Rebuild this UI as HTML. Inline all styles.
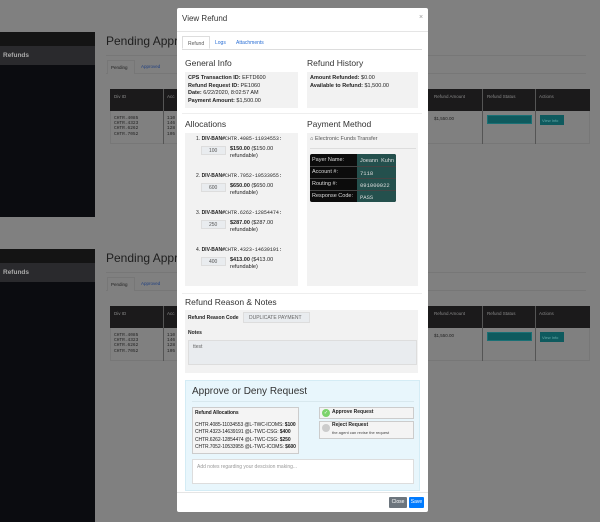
<!DOCTYPE html>
<html><head><meta charset="utf-8"><style>
*{margin:0;padding:0;box-sizing:border-box}
html{width:600px;height:522px;overflow:hidden}
body{width:600px;height:522px;background:#808080;position:relative;overflow:hidden;font-family:"Liberation Sans",sans-serif;}
.a{position:absolute;white-space:nowrap}
.mono{font-family:"Liberation Mono",monospace}
.t{font-size:5.5px;color:#222;line-height:7.5px}
.b{font-weight:bold}
.h{font-size:8.5px;color:#333}
.gray{background:#f2f2f2}
.w{white-space:normal}
</style></head><body>

<div class="a" style="left:0;top:0;width:600px;height:217px;overflow:hidden">
 <div class="a" style="left:0;top:32px;width:95px;height:185px;background:#0b0c10"></div>
 <div class="a" style="left:0;top:32px;width:95px;height:14px;background:#141414"></div>
 <div class="a" style="left:0;top:46px;width:95px;height:19px;background:#2a2a2d;color:#aaa;font-size:6.5px;font-weight:bold;padding:6px 3px">Refunds</div>
 <div class="a" style="left:106px;top:34px;font-size:12px;color:#1e1e1e">Pending Approv</div>
 <div class="a" style="left:106px;top:55px;width:480px;height:1px;background:#777"></div>
 <div class="a" style="left:106px;top:73px;width:480px;height:1px;background:#777"></div>
 <div class="a" style="left:107px;top:60px;width:28px;height:14px;border:1px solid #777;border-bottom:none;background:#808080;font-size:4.5px;color:#222;padding:4px 3px">Pending</div>
 <div class="a" style="left:141px;top:64px;font-size:4.5px;color:#1f3f80">Approved</div>
 <div class="a" style="left:110px;top:89px;width:480px;height:22px;background:#1b1a1b"></div>
 <div class="a" style="left:110px;top:111px;width:480px;height:33px;border:1px solid #777;border-top:none"></div>
 <div class="a" style="left:163px;top:89px;width:1px;height:55px;background:#555"></div>
 <div class="a" style="left:482px;top:89px;width:1px;height:55px;background:#555"></div>
 <div class="a" style="left:535px;top:89px;width:1px;height:55px;background:#555"></div>
 <div class="a" style="left:114px;top:94px;font-size:4.5px;color:#888">Div ID</div>
 <div class="a" style="left:167px;top:94px;font-size:4.5px;color:#888">Acc</div>
 <div class="a" style="left:434px;top:94px;font-size:4.5px;color:#888">Refund Amount</div>
 <div class="a" style="left:487px;top:94px;font-size:4.5px;color:#888">Refund Status</div>
 <div class="a" style="left:539px;top:94px;font-size:4.5px;color:#888">Actions</div>
 <div class="a mono" style="left:114px;top:116px;font-size:4.5px;line-height:5.2px;color:#222">CHTR.4085<br>CHTR.4323<br>CHTR.6262<br>CHTR.7052</div>
 <div class="a mono" style="left:167px;top:116px;font-size:4.5px;line-height:5.2px;color:#222">110<br>146<br>128<br>105</div>
 <div class="a" style="left:434px;top:116px;font-size:4.5px;color:#222">$1,550.00</div>
 <div class="a" style="left:487px;top:115px;width:45px;height:9px;background:#0e5a5e;border:1px solid #1a7075"></div>
 <div class="a" style="left:540px;top:115px;width:24px;height:10px;background:#0e5a5e;font-size:4px;color:#6aa;padding:3px 2px">View Info</div>
</div>
<div class="a" style="left:0;top:217px;width:600px;height:305px;overflow:hidden">
 <div class="a" style="left:0;top:32px;width:95px;height:290px;background:#0b0c10"></div>
 <div class="a" style="left:0;top:32px;width:95px;height:14px;background:#141414"></div>
 <div class="a" style="left:0;top:46px;width:95px;height:19px;background:#2a2a2d;color:#aaa;font-size:6.5px;font-weight:bold;padding:6px 3px">Refunds</div>
 <div class="a" style="left:106px;top:34px;font-size:12px;color:#1e1e1e">Pending Approv</div>
 <div class="a" style="left:106px;top:55px;width:480px;height:1px;background:#777"></div>
 <div class="a" style="left:106px;top:73px;width:480px;height:1px;background:#777"></div>
 <div class="a" style="left:107px;top:60px;width:28px;height:14px;border:1px solid #777;border-bottom:none;background:#808080;font-size:4.5px;color:#222;padding:4px 3px">Pending</div>
 <div class="a" style="left:141px;top:64px;font-size:4.5px;color:#1f3f80">Approved</div>
 <div class="a" style="left:110px;top:89px;width:480px;height:22px;background:#1b1a1b"></div>
 <div class="a" style="left:110px;top:111px;width:480px;height:33px;border:1px solid #777;border-top:none"></div>
 <div class="a" style="left:163px;top:89px;width:1px;height:55px;background:#555"></div>
 <div class="a" style="left:482px;top:89px;width:1px;height:55px;background:#555"></div>
 <div class="a" style="left:535px;top:89px;width:1px;height:55px;background:#555"></div>
 <div class="a" style="left:114px;top:94px;font-size:4.5px;color:#888">Div ID</div>
 <div class="a" style="left:167px;top:94px;font-size:4.5px;color:#888">Acc</div>
 <div class="a" style="left:434px;top:94px;font-size:4.5px;color:#888">Refund Amount</div>
 <div class="a" style="left:487px;top:94px;font-size:4.5px;color:#888">Refund Status</div>
 <div class="a" style="left:539px;top:94px;font-size:4.5px;color:#888">Actions</div>
 <div class="a mono" style="left:114px;top:116px;font-size:4.5px;line-height:5.2px;color:#222">CHTR.4085<br>CHTR.4323<br>CHTR.6262<br>CHTR.7052</div>
 <div class="a mono" style="left:167px;top:116px;font-size:4.5px;line-height:5.2px;color:#222">110<br>146<br>128<br>105</div>
 <div class="a" style="left:434px;top:116px;font-size:4.5px;color:#222">$1,550.00</div>
 <div class="a" style="left:487px;top:115px;width:45px;height:9px;background:#0e5a5e;border:1px solid #1a7075"></div>
 <div class="a" style="left:540px;top:115px;width:24px;height:10px;background:#0e5a5e;font-size:4px;color:#6aa;padding:3px 2px">View Info</div>
</div>

<div class="a" style="left:177px;top:8px;width:251px;height:504px;background:#fff;border-radius:2px">
 <div class="a" style="left:5px;top:6px;font-size:8px;color:#333">View Refund</div>
 <div class="a" style="left:242px;top:6px;font-size:7px;color:#999">×</div>
 <div class="a" style="left:0;top:23px;width:251px;height:1px;background:#e5e5e5"></div>
 <div class="a" style="left:5px;top:28px;width:28px;height:13px;border:1px solid #ddd;border-bottom:1px solid #fff;font-size:5px;color:#555;padding:4px 5px;background:#fff;z-index:2">Refund</div>
 <div class="a" style="left:5px;top:41px;width:240px;height:1px;background:#ddd"></div>
 <div class="a" style="left:38px;top:32px;font-size:5px;color:#2a6fd6">Logs</div>
 <div class="a" style="left:59px;top:32px;font-size:5px;color:#2a6fd6">Attachments</div>

 <div class="a h" style="left:8px;top:50px">General Info</div>
 <div class="a h" style="left:130px;top:50px">Refund History</div>
 <div class="a gray t" style="left:8px;top:64px;width:113px;height:36px;padding:3px 3px"><b>CPS Transaction ID:</b> EFTD600<br><b>Refund Request ID:</b> PE1060<br><b>Date:</b> 6/22/2020, 8:02:57 AM<br><b>Payment Amount:</b> $1,500.00</div>
 <div class="a gray t" style="left:130px;top:64px;width:111px;height:36px;padding:3px 3px"><b>Amount Refunded:</b> $0.00<br><b>Available to Refund:</b> $1,500.00</div>
 <div class="a" style="left:5px;top:105px;width:240px;height:1px;background:#eee"></div>

 <div class="a h" style="left:8px;top:111px">Allocations</div>
 <div class="a h" style="left:130px;top:111px">Payment Method</div>
 <div class="a gray" style="left:8px;top:125px;width:113px;height:153px"></div>
 <div class="a gray" style="left:130px;top:125px;width:111px;height:153px"></div>

 <div class="a t" style="left:19px;top:128px;font-size:5px">1. <b>DIV-BAN#</b><span class="mono">CHTR.4085-11034553:</span></div>
 <div class="a" style="left:24px;top:138px;width:25px;height:9px;background:#e9ecef;border:1px solid #ddd;font-size:5px;color:#555;padding:1px 7px">100</div>
 <div class="a t w" style="left:53px;top:138px;width:65px;line-height:7px"><b>$150.00</b> ($150.00 refundable)</div>
 <div class="a t" style="left:19px;top:165px;font-size:5px">2. <b>DIV-BAN#</b><span class="mono">CHTR.7052-10533955:</span></div>
 <div class="a" style="left:24px;top:175px;width:25px;height:9px;background:#e9ecef;border:1px solid #ddd;font-size:5px;color:#555;padding:1px 7px">600</div>
 <div class="a t w" style="left:53px;top:175px;width:65px;line-height:7px"><b>$650.00</b> ($650.00 refundable)</div>
 <div class="a t" style="left:19px;top:202px;font-size:5px">3. <b>DIV-BAN#</b><span class="mono">CHTR.6262-12854474:</span></div>
 <div class="a" style="left:24px;top:212px;width:25px;height:9px;background:#e9ecef;border:1px solid #ddd;font-size:5px;color:#555;padding:1px 7px">250</div>
 <div class="a t w" style="left:53px;top:212px;width:65px;line-height:7px"><b>$287.00</b> ($287.00 refundable)</div>
 <div class="a t" style="left:19px;top:239px;font-size:5px">4. <b>DIV-BAN#</b><span class="mono">CHTR.4323-14639191:</span></div>
 <div class="a" style="left:24px;top:249px;width:25px;height:9px;background:#e9ecef;border:1px solid #ddd;font-size:5px;color:#555;padding:1px 7px">400</div>
 <div class="a t w" style="left:53px;top:249px;width:65px;line-height:7px"><b>$413.00</b> ($413.00 refundable)</div>

 <div class="a t" style="left:133px;top:128px;color:#555">⌂ Electronic Funds Transfer</div>
 <div class="a" style="left:133px;top:140px;width:106px;height:1px;background:#ddd"></div>
 <div class="a" style="left:133px;top:146px;width:86px;height:48px;background:#0c0c0c;border-radius:2px;overflow:hidden;font-size:5.5px;color:#ddd">
  <div class="a" style="left:47px;top:0;width:39px;height:48px;background:#24504d"></div>
  <div class="a" style="left:2px;top:3px">Payer Name:</div><div class="a" style="left:50px;top:4px">Joeann&nbsp; Kuhn</div>
  <div class="a" style="left:0;top:12px;width:86px;height:1px;background:#444"></div>
  <div class="a" style="left:2px;top:15px">Account #:</div><div class="a mono" style="left:50px;top:16px">7118</div>
  <div class="a" style="left:0;top:24px;width:86px;height:1px;background:#444"></div>
  <div class="a" style="left:2px;top:27px">Routing #:</div><div class="a mono" style="left:50px;top:28px">091000022</div>
  <div class="a" style="left:0;top:36px;width:86px;height:1px;background:#444"></div>
  <div class="a" style="left:2px;top:39px">Response Code:</div><div class="a mono" style="left:50px;top:40px">PASS</div>
 </div>
 <div class="a" style="left:5px;top:285px;width:240px;height:1px;background:#eee"></div>

 <div class="a h" style="left:8px;top:289px">Refund Reason &amp; Notes</div>
 <div class="a gray" style="left:8px;top:302px;width:233px;height:63px"></div>
 <div class="a t b" style="left:11px;top:307px;font-size:5px">Refund Reason Code</div>
 <div class="a" style="left:66px;top:304px;width:67px;height:11px;background:#e9ecef;border:1px solid #ddd;font-size:5px;color:#666;padding:2px 5px">DUPLICATE PAYMENT</div>
 <div class="a t b" style="left:11px;top:322px;font-size:5px">Notes</div>
 <div class="a" style="left:11px;top:332px;width:229px;height:25px;background:#e9ecef;border:1px solid #ddd;font-size:5px;color:#666;padding:3px 4px">ttest</div>

 <div class="a" style="left:8px;top:372px;width:235px;height:111px;background:#e8f6fc;border:1px solid #d4ecf5"></div>
 <div class="a" style="left:15px;top:378px;font-size:10px;color:#333">Approve or Deny Request</div>
 <div class="a" style="left:15px;top:393px;width:222px;height:1px;background:#d8e8ee"></div>
 <div class="a t" style="left:15px;top:399px;width:107px;height:47px;background:#f4f4f4;border:1px solid #ccc;padding:2px 2px;line-height:7.5px;font-size:5px;letter-spacing:-0.1px;overflow:hidden"><b>Refund Allocations</b><br><span style="display:block;height:4px"></span>CHTR.4085-11034553 @L-TWC-ICOMS: <b>$100</b><br>CHTR.4323-14639191 @L-TWC-CSG: <b>$400</b><br>CHTR.6262-12854474 @L-TWC-CSG: <b>$250</b><br>CHTR.7052-10533955 @L-TWC-ICOMS: <b>$600</b></div>
 <div class="a" style="left:142px;top:399px;width:95px;height:12px;background:#f4f4f4;border:1px solid #ccc"></div>
 <div class="a" style="left:145px;top:401px;width:8px;height:8px;border-radius:50%;background:#7bd36b;color:#fff;font-size:5px;text-align:center;line-height:8px">✓</div>
 <div class="a t b" style="left:155px;top:401px;font-size:5px">Approve Request</div>
 <div class="a" style="left:142px;top:413px;width:95px;height:18px;background:#f4f4f4;border:1px solid #ccc"></div>
 <div class="a" style="left:145px;top:416px;width:8px;height:8px;border-radius:50%;background:#ccc"></div>
 <div class="a t b" style="left:155px;top:414px;font-size:5px">Reject Request</div>
 <div class="a" style="left:155px;top:422px;font-size:4px;color:#444">the agent can revise the request</div>
 <div class="a" style="left:15px;top:451px;width:222px;height:25px;background:#fff;border:1px solid #ddd;font-size:5px;color:#999;padding:4px 4px">Add notes regarding your descision making...</div>

 <div class="a" style="left:0;top:484px;width:251px;height:1px;background:#e5e5e5"></div>
 <div class="a" style="left:212px;top:489px;width:18px;height:11px;background:#6c757d;border-radius:1px;font-size:5px;color:#fff;text-align:center;line-height:11px">Close</div>
 <div class="a" style="left:232px;top:489px;width:15px;height:11px;background:#007bff;border-radius:1px;font-size:5px;color:#fff;text-align:center;line-height:11px">Save</div>
</div>
</body></html>
